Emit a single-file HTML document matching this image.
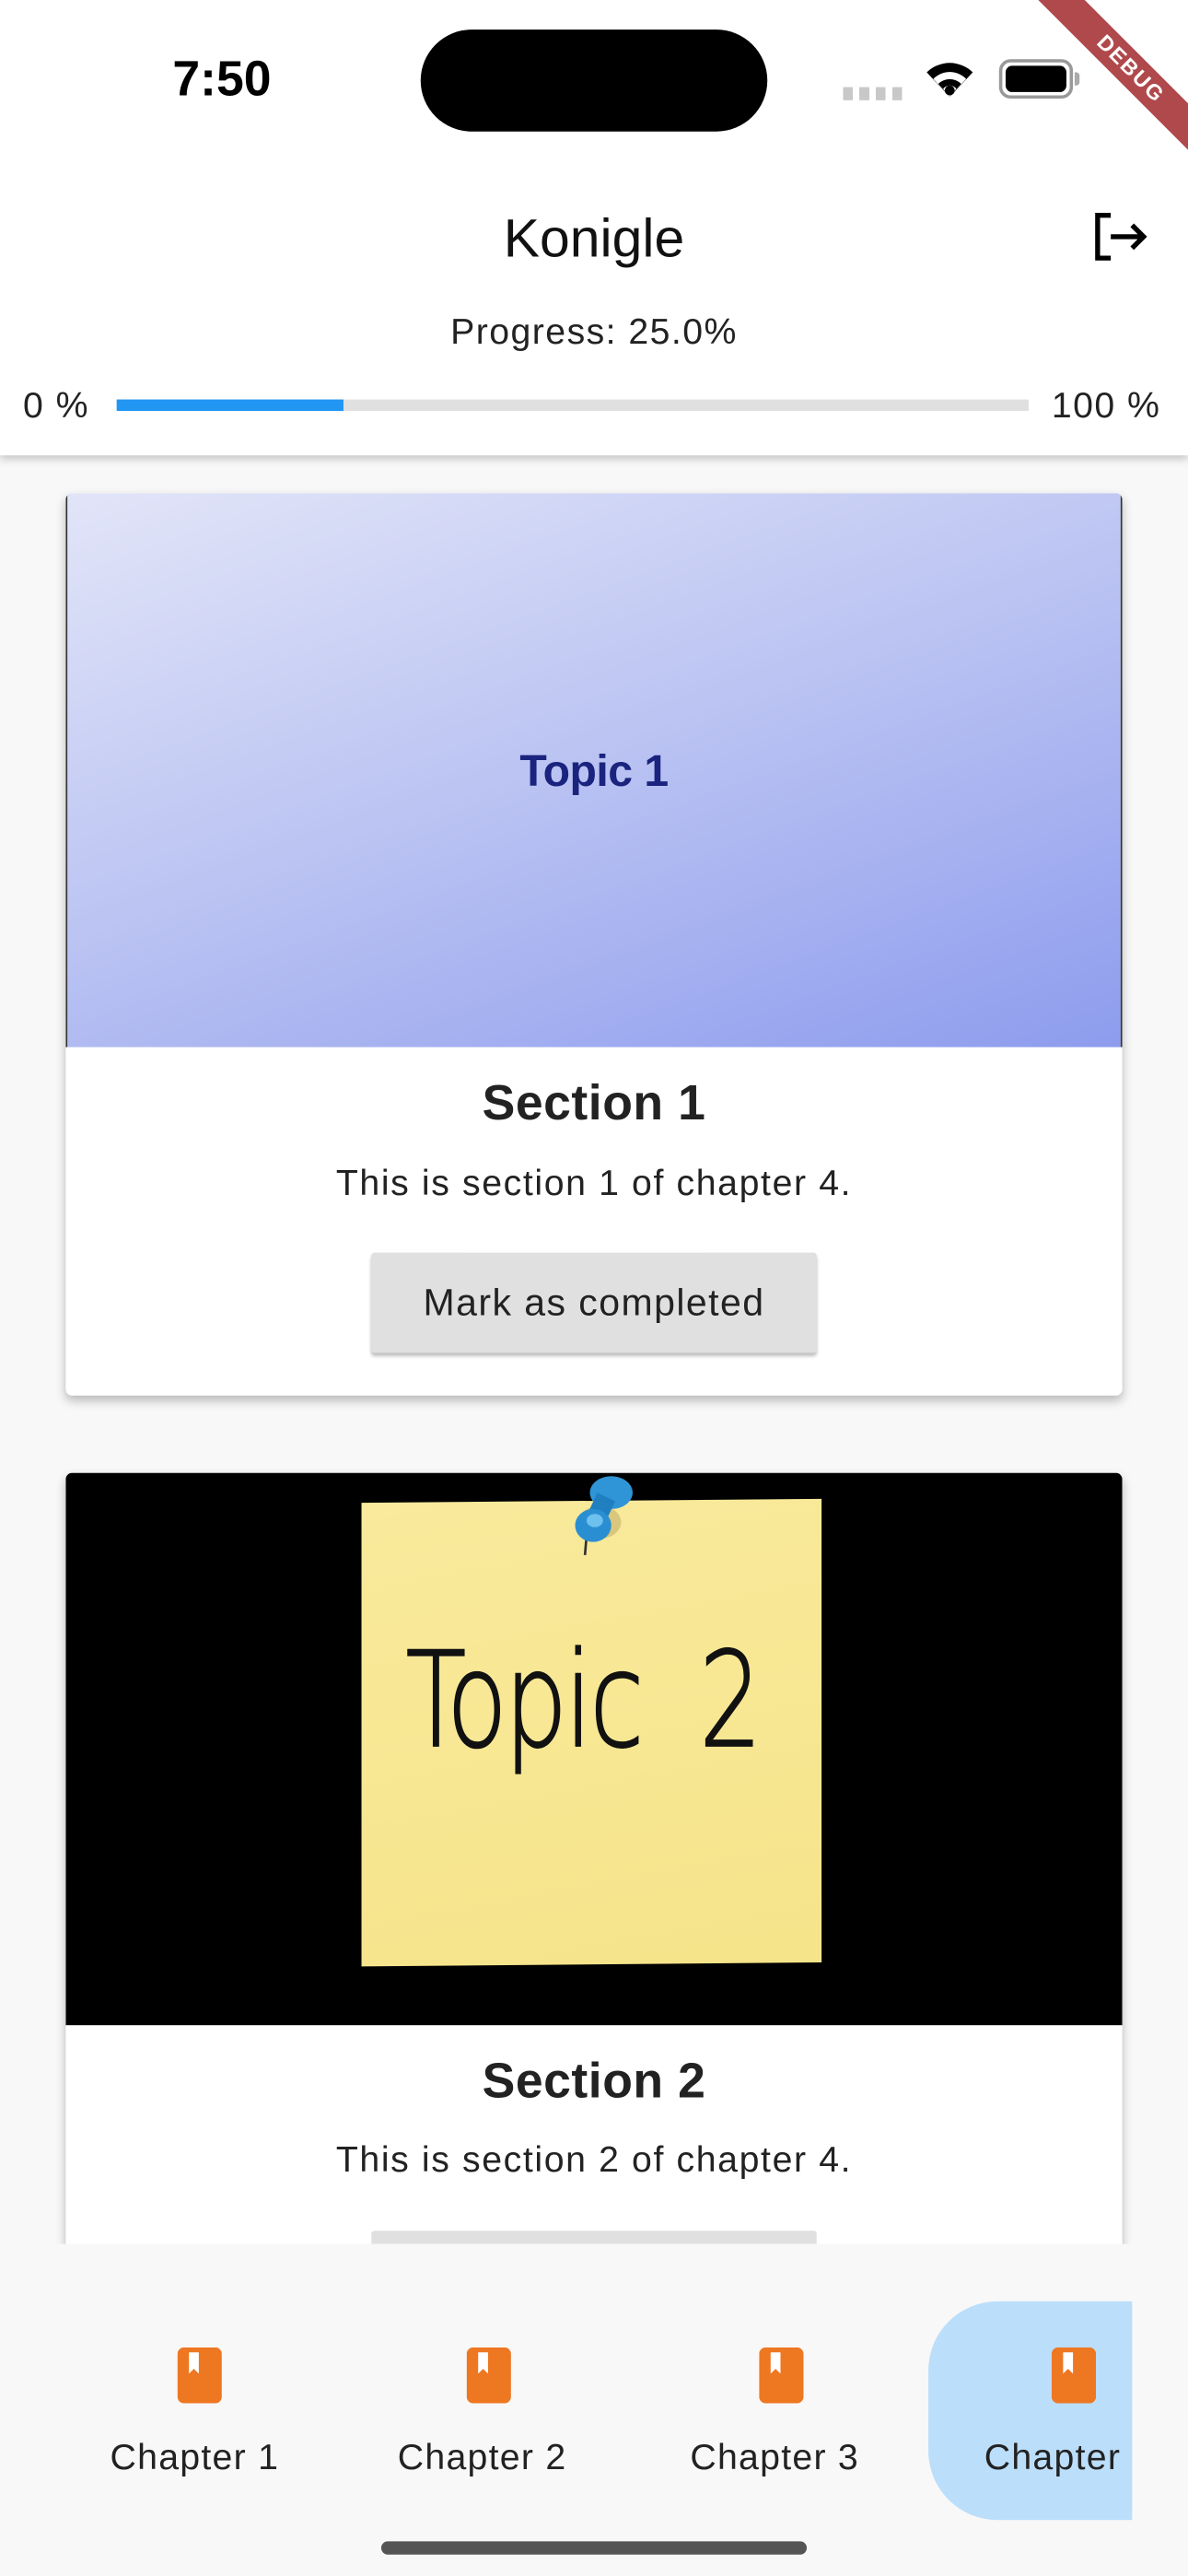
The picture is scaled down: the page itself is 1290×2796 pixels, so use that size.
<!DOCTYPE html>
<html><head><meta charset="utf-8">
<style>
html,body{margin:0;padding:0;width:1290px;height:2796px;overflow:hidden;background:#f8f8f8}
#s{position:absolute;left:0;top:0;width:723px;height:1567px;transform:scale(1.78423);transform-origin:0 0;font-family:"Liberation Sans",sans-serif;color:#222;background:#f8f8f8;overflow:hidden}
.a{position:absolute}
.c{text-align:center}
</style></head><body>
<div id="s">
  <!-- card 1 -->
  <div class="a" style="left:40px;top:300px;width:643px;height:549px;background:#fff;border-radius:4px;box-shadow:0 3px 6px rgba(0,0,0,.25);overflow:hidden">
    <div class="a" style="left:0;top:0;width:643px;height:337px;background:linear-gradient(160deg,#e2e5f8 0%,#b9c2f2 50%,#8d9cee 100%);border-left:1px solid #333;border-right:1px solid #333;box-sizing:border-box"></div>
    <div class="a c" style="left:0;width:643px;top:154px;font-size:27px;font-weight:bold;color:#1a237e;letter-spacing:-0.3px">Topic 1</div>
    <div class="a c" style="left:0;width:643px;top:355px;font-size:30px;font-weight:bold;letter-spacing:0.3px">Section 1</div>
    <div class="a c" style="left:0;width:643px;top:407px;font-size:22px;letter-spacing:0.9px">This is section 1 of chapter 4.</div>
    <div class="a c" style="left:186px;top:462px;width:271px;height:61px;background:#e0e0e0;border-radius:2px;box-shadow:0 2px 2px rgba(0,0,0,.25);font-size:23px;letter-spacing:0.8px;line-height:61px">Mark as completed</div>
  </div>
  <!-- card 2 -->
  <div class="a" style="left:40px;top:896px;width:643px;height:560px;background:#fff;border-radius:4px;box-shadow:0 3px 6px rgba(0,0,0,.25);overflow:hidden">
    <div class="a" style="left:0;top:0;width:643px;height:336px;background:#000"></div>
    <div class="a" style="left:180px;top:17px;width:280px;height:282px;background:linear-gradient(170deg,#f9ea9c,#f6e48a);transform:skewY(-0.5deg)"></div>
    <svg class="a" style="left:300px;top:0" width="50" height="60" viewBox="0 0 50 60">
      <line x1="17" y1="38" x2="16" y2="50" stroke="#333" stroke-width="1.5"/>
      <ellipse cx="25" cy="30" rx="13" ry="10" fill="rgba(120,100,40,.25)"/>
      <ellipse cx="32" cy="12" rx="13" ry="10" fill="#2f95d6"/>
      <rect x="20" y="14" width="12" height="14" fill="#1f7fc0" transform="rotate(25 26 21)"/>
      <ellipse cx="21" cy="32" rx="11" ry="10" fill="#2a8fd2"/>
      <ellipse cx="22" cy="29" rx="5" ry="4" fill="#6ec0ee"/>
    </svg>
    <div class="a" style="left:207px;top:92px;font-size:80px;font-family:'DejaVu Sans',sans-serif;font-weight:200;color:#111;transform:scaleX(0.75);transform-origin:0 0;letter-spacing:-2px;-webkit-text-stroke:1.2px #111">Topic&nbsp;&nbsp;2</div>
    <div class="a c" style="left:0;width:643px;top:354px;font-size:30px;font-weight:bold;letter-spacing:0.3px">Section 2</div>
    <div class="a c" style="left:0;width:643px;top:405px;font-size:22px;letter-spacing:0.9px">This is section 2 of chapter 4.</div>
    <div class="a" style="left:186px;top:461px;width:271px;height:61px;background:#e0e0e0;border-radius:2px"></div>
  </div>
  <!-- app bar -->
  <div class="a" style="left:0;top:0;width:723px;height:277px;background:#fff;box-shadow:0 2px 5px rgba(0,0,0,.22)">
    <div class="a" style="left:105px;top:32px;font-size:30px;font-weight:bold;color:#000">7:50</div>
    <div class="a" style="left:256px;top:18px;width:211px;height:62px;background:#000;border-radius:31px"></div>
    <div class="a" style="left:513px;top:53px;width:37px;height:8px;background:repeating-linear-gradient(90deg,#c8c8c8 0 6px,transparent 6px 10px)"></div>
    <svg class="a" style="left:562px;top:36px" width="32" height="24" viewBox="0 0 32 24"><path d="M16 23 L2 8 A20 20 0 0 1 30 8 Z" fill="#000"/><path d="M16 23 L6 12 A14 14 0 0 1 26 12 Z" fill="#fff"/><path d="M16 23 L9 15 A10 10 0 0 1 23 15 Z" fill="#000"/><path d="M16 23 L12 18 A5 5 0 0 1 20 18 Z" fill="#fff"/><circle cx="16" cy="19" r="3" fill="#000"/></svg>
    <div class="a" style="left:608px;top:36px;width:45px;height:24px;border:2px solid #999;border-radius:7px;box-sizing:border-box;padding:2px"><div style="width:100%;height:100%;background:#000;border-radius:4px"></div></div>
    <div class="a" style="left:654px;top:44px;width:3px;height:8px;background:#aaa;border-radius:0 2px 2px 0"></div>
    <div class="a c" style="left:0;width:723px;top:126px;font-size:33px;color:#111">Konigle</div>
    <svg class="a" style="left:664px;top:127px" width="38" height="34" viewBox="0 0 38 34"><path d="M12 4 H4 V30 H12" fill="none" stroke="#000" stroke-width="3"/><path d="M12 17 H32 M25 10 L32 17 L25 24" fill="none" stroke="#000" stroke-width="3"/></svg>
    <div class="a c" style="left:0;width:723px;top:189px;font-size:22px;letter-spacing:0.8px;color:#222">Progress: 25.0%</div>
    <div class="a" style="left:14px;top:234px;font-size:22px;letter-spacing:0.8px;color:#222">0 %</div>
    <div class="a" style="left:71px;top:243px;width:555px;height:7px;background:#e0e0e0"><div style="width:138px;height:7px;background:#2196f3"></div></div>
    <div class="a" style="left:640px;top:234px;font-size:22px;letter-spacing:0.8px;color:#222">100 %</div>
  </div>
  <!-- debug banner -->
  <div class="a" style="left:613px;top:32px;width:150px;height:20px;background:#b0494c;transform:rotate(45deg);color:#fff;font-size:13px;font-weight:bold;text-align:center;line-height:20px;letter-spacing:1px">DEBUG</div>
  <!-- bottom nav -->
  <div class="a" style="left:0;top:1365px;width:723px;height:203px;background:#f8f8f8">
    <div class="a" style="left:565px;top:35px;width:124px;height:133px;background:#bbdefb;border-radius:42px 0 0 42px"></div>
    <svg class="a" style="left:108px;top:63px" width="27" height="34" viewBox="0 0 27 34"><rect x="0" y="0" width="27" height="34" rx="4" fill="#ee7722"/><path d="M7 3 H13 V16 L10 13 L7 16 Z" fill="#fff"/></svg>
    <svg class="a" style="left:284px;top:63px" width="27" height="34" viewBox="0 0 27 34"><rect x="0" y="0" width="27" height="34" rx="4" fill="#ee7722"/><path d="M7 3 H13 V16 L10 13 L7 16 Z" fill="#fff"/></svg>
    <svg class="a" style="left:462px;top:63px" width="27" height="34" viewBox="0 0 27 34"><rect x="0" y="0" width="27" height="34" rx="4" fill="#ee7722"/><path d="M7 3 H13 V16 L10 13 L7 16 Z" fill="#fff"/></svg>
    <svg class="a" style="left:640px;top:63px" width="27" height="34" viewBox="0 0 27 34"><rect x="0" y="0" width="27" height="34" rx="4" fill="#ee7722"/><path d="M7 3 H13 V16 L10 13 L7 16 Z" fill="#fff"/></svg>
    <div class="a" style="left:67px;top:117px;font-size:22px;letter-spacing:0.7px">Chapter 1</div>
    <div class="a" style="left:242px;top:117px;font-size:22px;letter-spacing:0.7px">Chapter 2</div>
    <div class="a" style="left:420px;top:117px;font-size:22px;letter-spacing:0.7px">Chapter 3</div>
    <div class="a" style="left:599px;top:117px;font-size:22px;letter-spacing:0.7px;width:90px;overflow:hidden;white-space:nowrap">Chapter 4</div>
    <div class="a" style="left:232px;top:181px;width:259px;height:8px;background:#555;border-radius:4px"></div>
  </div>
</div>
</body></html>
